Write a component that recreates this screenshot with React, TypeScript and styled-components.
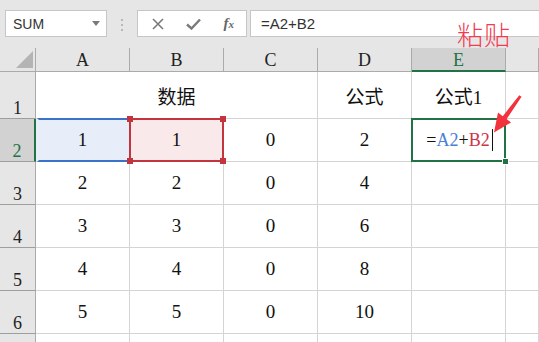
import styled, { createGlobalStyle } from "styled-components";

const GlobalStyle = createGlobalStyle`
  html, body { margin: 0; padding: 0; background: #fff; }
  body { font-family: "Liberation Serif", "Noto Sans CJK SC", serif; }
`;

const GREEN = "#217346";

const data = [
  ["1", "1", "0", "2"],
  ["2", "2", "0", "4"],
  ["3", "3", "0", "6"],
  ["4", "4", "0", "8"],
  ["5", "5", "0", "10"],
];

const App = () => {
  return (
    <Page>
      <GlobalStyle />
      <Toolbar>
        <NameBox>
          SUM
          <svg width="8" height="5" viewBox="0 0 8 5">
            <path d="M0 0h8L4 5z" fill="#7a7a7a" />
          </svg>
        </NameBox>
        <Grip>
          <i />
          <i />
          <i />
        </Grip>
        <FxBox>
          <svg width="12" height="12" viewBox="0 0 12 12">
            <path d="M1 1l10 10M11 1L1 11" stroke="#7a7a7a" strokeWidth="1.6" />
          </svg>
          <svg width="15" height="12" viewBox="0 0 15 12">
            <path d="M1 6.5l4.5 4L14 1.5" stroke="#7a7a7a" strokeWidth="2.4" fill="none" />
          </svg>
          <FxLabel>
            f<small>x</small>
          </FxLabel>
        </FxBox>
        <FormulaInput>=A2+B2</FormulaInput>
      </Toolbar>

      <Sheet>
        <Corner>
          <svg width="17" height="17" viewBox="0 0 17 17">
            <path d="M17 0v17H0z" fill="#b4b4b4" />
          </svg>
        </Corner>
        {["A", "B", "C", "D", "E"].map((c) => (
          <ColHead key={c} $active={c === "E"}>
            {c}
          </ColHead>
        ))}
        <ColHead />

        <RowHead>1</RowHead>
        <Cell $span={3}>数据</Cell>
        <Cell>公式</Cell>
        <Cell>公式1</Cell>
        <Cell />

        {data.map((row, i) => (
          <Row key={i} row={row} n={i + 2} />
        ))}

        <RowHead>7</RowHead>
        <Cell />
        <Cell />
        <Cell />
        <Cell />
        <Cell />
        <Cell />
      </Sheet>

      <PasteNote>粘贴</PasteNote>
      <Arrow width="539" height="342" viewBox="0 0 539 342">
        <path
          d="M521.5 96.8 L506.6 119 L511 122.4 L494 132.5 L498 112.6 L502.8 116.2 L519.3 95.2 Z"
          fill="#f2323c"
        />
      </Arrow>
    </Page>
  );
};

const Row = ({ row, n }: { row: string[]; n: number }) => {
  const first = n === 2;
  return (
    <>
      <RowHead $active={first}>{n}</RowHead>
      <Cell $tint={first ? "#e8eef9" : undefined}>
        {row[0]}
        {first && <RefBox $color="#3a72c9" $open />}
      </Cell>
      <Cell $tint={first ? "#f9e9ea" : undefined}>
        {row[1]}
        {first && (
          <RefBox $color="#c3343f">
            <Handle $x="left" $y="top" />
            <Handle $x="right" $y="top" />
            <Handle $x="left" $y="bottom" />
            <Handle $x="right" $y="bottom" />
          </RefBox>
        )}
      </Cell>
      <Cell>{row[2]}</Cell>
      <Cell>{row[3]}</Cell>
      <Cell>
        {first && (
          <>
            <Formula>
              =<Ref $color="#4a7fd8">A2</Ref>+<Ref $color="#cc3548">B2</Ref>
              <Caret />
            </Formula>
            <ActiveBox>
              <FillHandle />
            </ActiveBox>
          </>
        )}
      </Cell>
      <Cell />
    </>
  );
};

export default App;

const Page = styled.div`
  position: relative;
  width: 539px;
  height: 342px;
  overflow: hidden;
  background: #fff;
`;

const Toolbar = styled.div`
  height: 48px;
  box-sizing: border-box;
  padding-top: 10px;
  background: #e6e6e6;
  display: flex;
  align-items: flex-start;
`;

const NameBox = styled.div`
  margin-left: 5px;
  width: 102px;
  height: 27px;
  box-sizing: border-box;
  background: #fff;
  border: 1px solid #c6c6c6;
  display: flex;
  align-items: center;
  justify-content: space-between;
  padding: 0 6px 0 7px;
  font: 14px "Liberation Sans", Arial, sans-serif;
  color: #333;
`;

const Grip = styled.div`
  margin: 9px 14px 0 14px;
  display: flex;
  flex-direction: column;
  gap: 3px;

  i {
    display: block;
    width: 2px;
    height: 2px;
    background: #b8b8b8;
  }
`;

const FxBox = styled.div`
  width: 110px;
  height: 27px;
  box-sizing: border-box;
  background: #fff;
  border: 1px solid #c6c6c6;
  display: flex;
  align-items: center;
  justify-content: space-between;
  padding: 0 12px 0 14px;
`;

const FxLabel = styled.span`
  font: italic 15px "Liberation Serif", serif;
  color: #666;
  font-weight: bold;

  small {
    font-size: 11px;
  }
`;

const FormulaInput = styled.div`
  margin-left: 3px;
  flex: 1;
  height: 27px;
  box-sizing: border-box;
  background: #fff;
  border: 1px solid #c6c6c6;
  border-right: none;
  display: flex;
  align-items: center;
  padding-left: 10px;
  font: 15px "Liberation Sans", Arial, sans-serif;
  color: #333;
`;

const Sheet = styled.div`
  display: grid;
  grid-template-columns: 36px repeat(5, 94px) 1fr;
  grid-template-rows: 24px 47px repeat(6, 43px);
  font-size: 18px;
  color: #111;
`;

const Corner = styled.div`
  background: #e6e6e6;
  border-right: 1px solid #ababab;
  border-bottom: 1px solid #ababab;
  display: flex;
  align-items: flex-end;
  justify-content: flex-end;
  padding: 0 2px 3px 0;
`;

const ColHead = styled.div<{ $active?: boolean }>`
  background: ${(p) => (p.$active ? "#d2d2d2" : "#e6e6e6")};
  color: ${(p) => (p.$active ? GREEN : "#222")};
  border-right: 1px solid #ababab;
  border-bottom: ${(p) => (p.$active ? `2px solid ${GREEN}` : "1px solid #ababab")};
  display: flex;
  align-items: center;
  justify-content: center;
  font-size: 18px;
  padding-top: 2px;
  box-sizing: border-box;
`;

const RowHead = styled.div<{ $active?: boolean }>`
  background: ${(p) => (p.$active ? "#d2d2d2" : "#e6e6e6")};
  color: ${(p) => (p.$active ? GREEN : "#222")};
  border-right: ${(p) => (p.$active ? `2px solid ${GREEN}` : "1px solid #ababab")};
  border-bottom: 1px solid #9e9e9e;
  display: flex;
  align-items: flex-end;
  justify-content: center;
  font-size: 18px;
  line-height: 18px;
  padding-bottom: 1px;
  box-sizing: border-box;
`;

const Cell = styled.div<{ $span?: number; $tint?: string }>`
  position: relative;
  grid-column: ${(p) => (p.$span ? `span ${p.$span}` : "auto")};
  background: ${(p) => p.$tint || "#fff"};
  border-right: 1px solid #d4d4d4;
  border-bottom: 1px solid #d4d4d4;
  display: flex;
  align-items: center;
  justify-content: center;
  font-size: 19px;
`;

const RefBox = styled.div<{ $color: string; $open?: boolean }>`
  position: absolute;
  top: -1px;
  bottom: -1px;
  left: ${(p) => (p.$open ? "1px" : "-1px")};
  right: -1px;
  border: 2px solid ${(p) => p.$color};
  border-left-color: ${(p) => (p.$open ? "transparent" : p.$color)};
  border-right-color: ${(p) => (p.$open ? "transparent" : p.$color)};
  z-index: 2;
`;

const Handle = styled.span<{ $x: "left" | "right"; $y: "top" | "bottom" }>`
  position: absolute;
  width: 6px;
  height: 6px;
  background: #c3343f;
  ${(p) => p.$x}: -4px;
  ${(p) => p.$y}: -4px;
`;

const ActiveBox = styled.div`
  position: absolute;
  top: -1px;
  left: -1px;
  right: -1px;
  bottom: -1px;
  border: 2px solid ${GREEN};
  z-index: 3;
`;

const FillHandle = styled.span`
  position: absolute;
  right: -5px;
  bottom: -5px;
  width: 5px;
  height: 5px;
  background: ${GREEN};
  border: 1px solid #fff;
`;

const Formula = styled.span`
  display: flex;
  align-items: center;
  font-size: 18px;
  margin-left: 2px;
`;

const Ref = styled.span<{ $color: string }>`
  color: ${(p) => p.$color};
`;

const Caret = styled.span`
  display: inline-block;
  width: 1px;
  height: 22px;
  background: #111;
  margin-left: 2px;
`;

const PasteNote = styled.div`
  position: absolute;
  left: 457px;
  top: 15px;
  font: 300 26px "Noto Sans CJK SC", sans-serif;
  color: #f43a52;
  letter-spacing: 1px;
`;

const Arrow = styled.svg`
  position: absolute;
  left: 0;
  top: 0;
  pointer-events: none;
  z-index: 5;
`;
